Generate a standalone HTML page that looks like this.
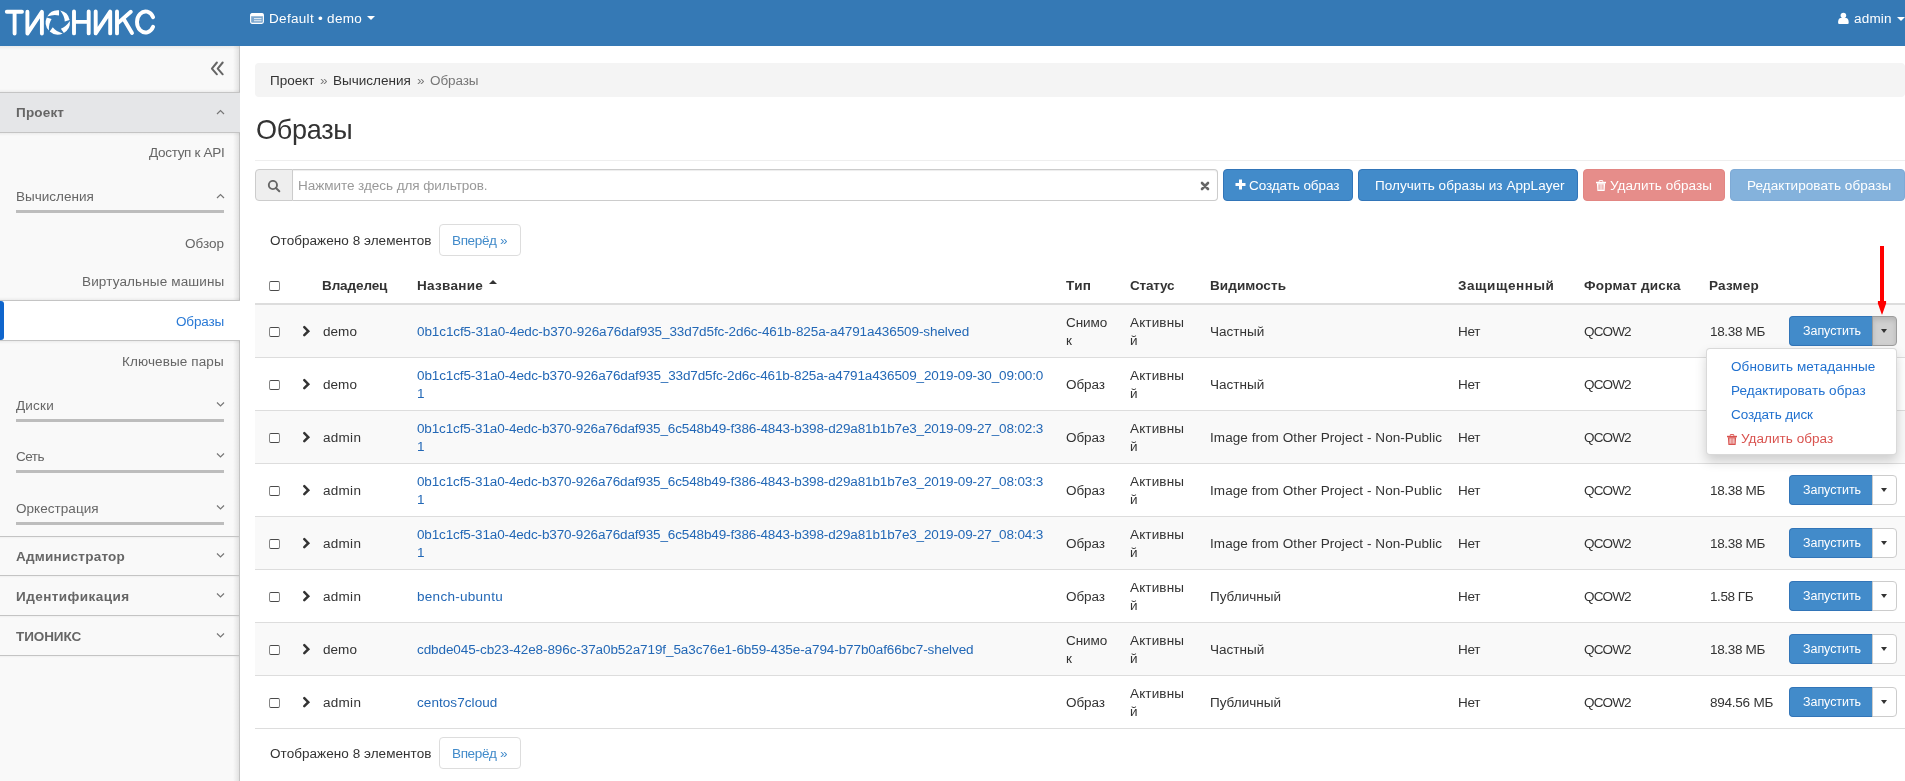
<!DOCTYPE html><html><head><meta charset="utf-8"><style>*{margin:0;padding:0}html,body{width:1905px;height:781px;overflow:hidden;background:#fff}
.a{position:absolute}.t{position:absolute;white-space:nowrap;will-change:transform;font-family:"Liberation Sans",sans-serif}</style></head><body><div class="a" style="left:0px;top:0px;width:1905px;height:46px;background:#3579b5"></div>
<svg class="a" style="left:0;top:0" width="170" height="46" viewBox="0 0 170 46">
<g fill="none" stroke="#fff" stroke-width="3.9" stroke-linecap="round" stroke-linejoin="round">
<path d="M6.8 11.7H22 M14.6 11.7V33.6"/>
<path d="M27.4 11.7V33.6 L41.9 11.9 V33.6"/>
<path d="M74 11.4V33.4 M74 21.9H88.7 M88.7 11.4V33.4"/>
<path d="M95.7 11.4V33.4 L110.2 11.6 V33.4"/>
<path d="M117 11.4V33.4 M117.3 23.6 L130.8 11.8 M123.4 18.4 L132 33"/>
<path d="M153.1 17.3 A8.5 10.5 0 1 0 153.1 26.7"/>
</g>
<g fill="#fff"><path d="M60.21 10.54 A12.1 12.1 0 0 1 69.64 19.88 L64.73 21.43 Q64.57 16.03 60.21 10.54Z"/><path d="M69.82 21.03 A12.1 12.1 0 0 1 63.85 32.88 L60.87 28.69 Q65.95 26.87 69.82 21.03Z"/><path d="M62.82 33.41 A12.1 12.1 0 0 1 49.70 31.39 L52.76 27.26 Q56.07 31.54 62.82 33.41Z"/><path d="M48.88 30.57 A12.1 12.1 0 0 1 46.75 17.48 L51.62 19.11 Q48.57 23.57 48.88 30.57Z"/><path d="M47.27 16.44 A12.1 12.1 0 0 1 59.06 10.37 L59.02 15.51 Q53.83 13.99 47.27 16.44Z"/></g>
</svg>
<svg class="a" style="left:250px;top:12.5px" width="14" height="11" viewBox="0 0 14 11">
<rect x="1" y="3" width="12" height="7" fill="#fff" opacity=".35"/>
<rect x="0.6" y="0.6" width="12.8" height="9.8" rx="1.6" fill="none" stroke="#fff" stroke-width="1.1"/>
<rect x="0.6" y="0.6" width="12.8" height="2.6" rx="1" fill="#fff"/>
<rect x="4" y="5.2" width="7.5" height="0.9" fill="#fff" opacity=".9"/>
<rect x="4" y="7.3" width="7.5" height="0.9" fill="#fff" opacity=".9"/>
</svg>
<div class="t" id="t0" style="left:269px;top:9.82px;font-size:13.52px;line-height:18px;color:#fff;font-weight:400;letter-spacing:0.302px;">Default • demo</div>
<div class="a" style="left:367px;top:16px;width:0;height:0;border-left:4px solid transparent;border-right:4px solid transparent;border-top:4.5px solid #fff"></div>
<svg class="a" style="left:1838px;top:12px" width="11" height="13" viewBox="0 0 11 13">
<circle cx="5.4" cy="3.5" r="2.8" fill="#fff"/>
<path d="M0.1 11 C0 8 0.9 6.3 2.4 6 L8.4 6 C9.9 6.3 10.8 8 10.7 11 Q10.6 12 9.6 12 L1.2 12 Q0.2 12 0.1 11 Z" fill="#fff"/>
</svg>
<div class="t" id="t1" style="left:1853.9px;top:9.97px;font-size:13.52px;line-height:18px;color:#fff;font-weight:400;letter-spacing:0.172px;">admin</div>
<div class="a" style="left:1897px;top:16.5px;width:0;height:0;border-left:4px solid transparent;border-right:4px solid transparent;border-top:4.5px solid #fff"></div>
<div class="a" style="left:0px;top:46px;width:240px;height:47px;background:#f9f9f9"></div>
<div class="a" style="left:233px;top:46px;width:6px;height:47px;background:linear-gradient(to right,rgba(0,0,0,0),rgba(0,0,0,.09))"></div>
<div class="a" style="left:239px;top:46px;width:1px;height:47px;background:#c4c4c4"></div>
<div class="a" style="left:0px;top:92px;width:240px;height:1px;background:#c4c4c4"></div>
<div class="a" style="left:0px;top:89px;width:240px;height:3px;background:linear-gradient(to top,rgba(0,0,0,.05),rgba(0,0,0,0))"></div>
<div class="a" style="left:0px;top:46px;width:239px;height:4px;background:linear-gradient(to bottom,rgba(0,0,0,.06),rgba(0,0,0,0))"></div>
<div class="a" style="left:0px;top:132px;width:240px;height:169px;background:#f9f9f9"></div>
<div class="a" style="left:233px;top:132px;width:6px;height:169px;background:linear-gradient(to right,rgba(0,0,0,0),rgba(0,0,0,.09))"></div>
<div class="a" style="left:239px;top:132px;width:1px;height:169px;background:#c4c4c4"></div>
<div class="a" style="left:0px;top:132px;width:240px;height:1px;background:#c4c4c4"></div>
<div class="a" style="left:0px;top:133px;width:240px;height:3px;background:linear-gradient(to bottom,rgba(0,0,0,.05),rgba(0,0,0,0))"></div>
<div class="a" style="left:0px;top:300px;width:240px;height:1px;background:#c4c4c4"></div>
<div class="a" style="left:0px;top:297px;width:240px;height:3px;background:linear-gradient(to top,rgba(0,0,0,.05),rgba(0,0,0,0))"></div>
<div class="a" style="left:0px;top:340px;width:240px;height:441px;background:#f9f9f9"></div>
<div class="a" style="left:233px;top:340px;width:6px;height:441px;background:linear-gradient(to right,rgba(0,0,0,0),rgba(0,0,0,.09))"></div>
<div class="a" style="left:239px;top:340px;width:1px;height:441px;background:#c4c4c4"></div>
<div class="a" style="left:0px;top:340px;width:240px;height:1px;background:#c4c4c4"></div>
<div class="a" style="left:0px;top:341px;width:240px;height:3px;background:linear-gradient(to bottom,rgba(0,0,0,.05),rgba(0,0,0,0))"></div>
<svg class="a" style="left:209px;top:60px" width="17" height="17" viewBox="0 0 17 17">
<path d="M7.9 2.5 L2.9 8.6 L7.9 14.3 M13.7 2.5 L8.7 8.6 L13.7 14.3" fill="none" stroke="#666" stroke-width="2" stroke-linecap="round" stroke-linejoin="round"/>
</svg>
<div class="a" style="left:0px;top:93px;width:240px;height:39px;background:#e5e6e8"></div>
<div class="t" id="t2" style="left:16px;top:104.32px;font-size:13.52px;line-height:18px;color:#666;font-weight:700;letter-spacing:0.172px;">Проект</div>
<svg class="a" style="left:216px;top:109px" width="9" height="7" viewBox="0 0 9 7"><path d="M1 5 L4.5 1.5 L8 5" fill="none" stroke="#777" stroke-width="1.2"/></svg>
<div class="t" id="t3" style="right:1681px;top:143.92px;font-size:13.52px;line-height:18px;color:#666;font-weight:400;letter-spacing:-0.311px;">Доступ к API</div>
<div class="t" id="t4" style="left:16px;top:188.12px;font-size:13.52px;line-height:18px;color:#666;font-weight:400;letter-spacing:0.008px;">Вычисления</div>
<svg class="a" style="left:216px;top:193px" width="9" height="7" viewBox="0 0 9 7"><path d="M1 5 L4.5 1.5 L8 5" fill="none" stroke="#777" stroke-width="1.2"/></svg>
<div class="a" style="left:16px;top:210px;width:208px;height:3px;background:#bdbdbd"></div>
<div class="t" id="t5" style="right:1681px;top:235.12px;font-size:13.52px;line-height:18px;color:#666;font-weight:400;letter-spacing:0.013px;">Обзор</div>
<div class="t" id="t6" style="right:1681px;top:273.02px;font-size:13.52px;line-height:18px;color:#666;font-weight:400;letter-spacing:0.134px;">Виртуальные машины</div>
<div class="a" style="left:0px;top:301px;width:244px;height:39px;background:#fff"></div>
<div class="a" style="left:0px;top:301px;width:4px;height:39px;background:#0f65cc;border-radius:0 3px 3px 0"></div>
<div class="t" id="t7" style="right:1681px;top:312.62px;font-size:13.52px;line-height:18px;color:#2a7ad6;font-weight:400;letter-spacing:-0.153px;">Образы</div>
<div class="t" id="t8" style="right:1681px;top:352.62px;font-size:13.52px;line-height:18px;color:#666;font-weight:400;letter-spacing:0.101px;">Ключевые пары</div>
<div class="t" id="t9" style="left:16px;top:397.22px;font-size:13.52px;line-height:18px;color:#666;font-weight:400;letter-spacing:0.191px;">Диски</div>
<svg class="a" style="left:216px;top:401px" width="9" height="7" viewBox="0 0 9 7"><path d="M1 1.5 L4.5 5 L8 1.5" fill="none" stroke="#777" stroke-width="1.2"/></svg>
<div class="a" style="left:16px;top:419px;width:208px;height:3px;background:#bdbdbd"></div>
<div class="t" id="t10" style="left:16px;top:447.72px;font-size:13.52px;line-height:18px;color:#666;font-weight:400;letter-spacing:-0.521px;">Сеть</div>
<svg class="a" style="left:216px;top:452px" width="9" height="7" viewBox="0 0 9 7"><path d="M1 1.5 L4.5 5 L8 1.5" fill="none" stroke="#777" stroke-width="1.2"/></svg>
<div class="a" style="left:16px;top:470px;width:208px;height:3px;background:#bdbdbd"></div>
<div class="t" id="t11" style="left:16px;top:499.62px;font-size:13.52px;line-height:18px;color:#666;font-weight:400;letter-spacing:0.040px;">Оркестрация</div>
<svg class="a" style="left:216px;top:504px" width="9" height="7" viewBox="0 0 9 7"><path d="M1 1.5 L4.5 5 L8 1.5" fill="none" stroke="#777" stroke-width="1.2"/></svg>
<div class="a" style="left:16px;top:522px;width:208px;height:3px;background:#bdbdbd"></div>
<div class="a" style="left:0px;top:536px;width:239px;height:1px;background:#c4c4c4"></div>
<div class="a" style="left:0px;top:537px;width:239px;height:2px;background:linear-gradient(to bottom,rgba(0,0,0,.04),rgba(0,0,0,0))"></div>
<div class="t" id="t12" style="left:16px;top:548.32px;font-size:13.52px;line-height:18px;color:#666;font-weight:700;letter-spacing:0.235px;">Администратор</div>
<svg class="a" style="left:216px;top:552px" width="9" height="7" viewBox="0 0 9 7"><path d="M1 1.5 L4.5 5 L8 1.5" fill="none" stroke="#777" stroke-width="1.2"/></svg>
<div class="a" style="left:0px;top:575px;width:239px;height:1px;background:#c4c4c4"></div>
<div class="a" style="left:0px;top:576px;width:239px;height:2px;background:linear-gradient(to bottom,rgba(0,0,0,.04),rgba(0,0,0,0))"></div>
<div class="t" id="t13" style="left:16px;top:588.12px;font-size:13.52px;line-height:18px;color:#666;font-weight:700;letter-spacing:0.448px;">Идентификация</div>
<svg class="a" style="left:216px;top:592px" width="9" height="7" viewBox="0 0 9 7"><path d="M1 1.5 L4.5 5 L8 1.5" fill="none" stroke="#777" stroke-width="1.2"/></svg>
<div class="a" style="left:0px;top:615px;width:239px;height:1px;background:#c4c4c4"></div>
<div class="a" style="left:0px;top:616px;width:239px;height:2px;background:linear-gradient(to bottom,rgba(0,0,0,.04),rgba(0,0,0,0))"></div>
<div class="t" id="t14" style="left:16px;top:627.52px;font-size:13.52px;line-height:18px;color:#666;font-weight:700;letter-spacing:-0.099px;">ТИОНИКС</div>
<svg class="a" style="left:216px;top:632px" width="9" height="7" viewBox="0 0 9 7"><path d="M1 1.5 L4.5 5 L8 1.5" fill="none" stroke="#777" stroke-width="1.2"/></svg>
<div class="a" style="left:0px;top:655px;width:239px;height:1px;background:#c4c4c4"></div>
<div class="a" style="left:0px;top:656px;width:239px;height:2px;background:linear-gradient(to bottom,rgba(0,0,0,.04),rgba(0,0,0,0))"></div>
<div class="a" style="left:255px;top:63px;width:1650px;height:34px;background:#f4f4f4;border-radius:4px"></div>
<div class="t" id="t15" style="left:270.3px;top:72.12px;font-size:13.52px;line-height:18px;color:#333;font-weight:400;letter-spacing:-0.006px;">Проект</div>
<div class="t" id="t16" style="left:320px;top:72.12px;font-size:13.52px;line-height:18px;color:#777;font-weight:400;">»</div>
<div class="t" id="t17" style="left:333.2px;top:72.12px;font-size:13.52px;line-height:18px;color:#333;font-weight:400;letter-spacing:-0.003px;">Вычисления</div>
<div class="t" id="t18" style="left:417px;top:72.12px;font-size:13.52px;line-height:18px;color:#777;font-weight:400;">»</div>
<div class="t" id="t19" style="left:429.5px;top:72.12px;font-size:13.52px;line-height:18px;color:#777;font-weight:400;letter-spacing:-0.113px;">Образы</div>
<div class="t" id="t20" style="left:256px;top:112.83px;font-size:27.04px;line-height:35px;color:#333;font-weight:400;letter-spacing:-0.282px;">Образы</div>
<div class="a" style="left:255px;top:160px;width:1650px;height:1px;background:#eee"></div>
<div class="a" style="left:255px;top:169px;width:38px;height:32px;background:#eee;border:1px solid #ccc;border-radius:4px 0 0 4px;box-sizing:border-box"></div>
<svg class="a" style="left:267px;top:180px" width="14" height="13" viewBox="0 0 14 13">
<circle cx="5.9" cy="5" r="4.1" fill="none" stroke="#666" stroke-width="1.9"/>
<path d="M8.9 8 L12.3 11.2" stroke="#666" stroke-width="2" stroke-linecap="round"/>
</svg>
<div class="a" style="left:293px;top:169px;width:925px;height:32px;background:#fff;border:1px solid #ccc;border-left:0;border-radius:0 4px 4px 0;box-sizing:border-box;box-shadow:inset 0 1px 1px rgba(0,0,0,.075)"></div>
<div class="t" id="t21" style="left:298.4px;top:177.32px;font-size:13.52px;line-height:18px;color:#999;font-weight:400;letter-spacing:-0.049px;">Нажмите здесь для фильтров.</div>
<svg class="a" style="left:1200px;top:181px" width="10" height="10" viewBox="0 0 10 10">
<path d="M2 2 L8 8 M8 2 L2 8" stroke="#666" stroke-width="2.6" stroke-linecap="round"/>
</svg>
<div class="a" style="left:1223px;top:169px;width:130px;height:32px;background:#428bca;border:1px solid #3275b8;box-sizing:border-box;border-radius:4px"></div>
<svg class="a" style="left:1235px;top:179.3px" width="11" height="11" viewBox="0 0 11 11">
<path d="M5.5 0.5 V10.5 M0.5 5.5 H10.5" stroke="#fff" stroke-width="3"/></svg>
<div class="t" id="t22" style="left:1249.4px;top:177.12px;font-size:13.52px;line-height:18px;color:#fff;font-weight:400;letter-spacing:-0.089px;">Создать образ</div>
<div class="a" style="left:1358px;top:169px;width:220px;height:32px;background:#428bca;border:1px solid #3275b8;box-sizing:border-box;border-radius:4px"></div>
<div class="t" id="t23" style="left:1375.1px;top:177.12px;font-size:13.52px;line-height:18px;color:#fff;font-weight:400;letter-spacing:0.049px;">Получить образы из AppLayer</div>
<div class="a" style="left:1583px;top:169px;width:142px;height:32px;background:#e68d8a;border:1px solid #e28683;box-sizing:border-box;border-radius:4px"></div>
<svg class="a" style="left:1596px;top:180px" width="10" height="11" viewBox="0 0 10 11">
<path d="M3.2 1.8 V1 Q3.2 0.4 3.9 0.4 H6.1 Q6.8 0.4 6.8 1 V1.8" stroke="#fff" stroke-width="1" fill="none"/>
<rect x="0" y="1.8" width="10" height="1.5" fill="#fff"/>
<path d="M0.9 3.2 H9.1 L8.6 11 H1.4 Z" fill="#fff"/>
<rect x="2.3" y="4.3" width="5.4" height="5.4" fill="#e68d8a" opacity=".6"/>
<rect x="4.6" y="4.3" width="0.8" height="5.4" fill="#fff" opacity=".8"/>
</svg>
<div class="t" id="t24" style="left:1609.6px;top:177.12px;font-size:13.52px;line-height:18px;color:#fff;font-weight:400;letter-spacing:0.037px;">Удалить образы</div>
<div class="a" style="left:1730px;top:169px;width:175px;height:32px;background:#84b2dc;border:1px solid #7eaad6;box-sizing:border-box;border-radius:4px"></div>
<div class="t" id="t25" style="left:1747.2px;top:177.12px;font-size:13.52px;line-height:18px;color:#fff;font-weight:400;letter-spacing:0.054px;">Редактировать образы</div>
<div class="t" id="t26" style="left:270.2px;top:232.02px;font-size:13.52px;line-height:18px;color:#333;font-weight:400;letter-spacing:0.047px;">Отображено 8 элементов</div>
<div class="a" style="left:439px;top:224px;width:82px;height:32px;background:#fff;border:1px solid #ddd;border-radius:4px;box-sizing:border-box"></div>
<div class="t" id="t27" style="left:452.2px;top:232.02px;font-size:13.52px;line-height:18px;color:#428bca;font-weight:400;letter-spacing:-0.364px;">Вперёд »</div>
<div class="a" style="left:269px;top:281px;width:11px;height:10.3px;background:#fff;border:1.3px solid #4a4a4a;border-left-color:#858585;border-right-color:#858585;border-radius:2px;box-sizing:border-box"></div>
<div class="t" id="t28" style="left:322.2px;top:276.82px;font-size:13.52px;line-height:18px;color:#333;font-weight:700;letter-spacing:-0.115px;">Владелец</div>
<div class="t" id="t29" style="left:417.2px;top:276.82px;font-size:13.52px;line-height:18px;color:#333;font-weight:700;letter-spacing:0.286px;">Название</div>
<div class="t" id="t30" style="left:1066.4px;top:276.82px;font-size:13.52px;line-height:18px;color:#333;font-weight:700;letter-spacing:0.391px;">Тип</div>
<div class="t" id="t31" style="left:1130.4px;top:276.82px;font-size:13.52px;line-height:18px;color:#333;font-weight:700;letter-spacing:-0.212px;">Статус</div>
<div class="t" id="t32" style="left:1209.5px;top:276.82px;font-size:13.52px;line-height:18px;color:#333;font-weight:700;letter-spacing:0.086px;">Видимость</div>
<div class="t" id="t33" style="left:1458.3px;top:276.82px;font-size:13.52px;line-height:18px;color:#333;font-weight:700;letter-spacing:0.567px;">Защищенный</div>
<div class="t" id="t34" style="left:1583.5px;top:276.82px;font-size:13.52px;line-height:18px;color:#333;font-weight:700;letter-spacing:0.202px;">Формат диска</div>
<div class="t" id="t35" style="left:1709.2px;top:276.82px;font-size:13.52px;line-height:18px;color:#333;font-weight:700;letter-spacing:0.226px;">Размер</div>
<div class="a" style="left:489px;top:279.5px;width:0;height:0;border-left:4px solid transparent;border-right:4px solid transparent;border-bottom:4.5px solid #333"></div>
<div class="a" style="left:255px;top:303px;width:1650px;height:2px;background:#ddd"></div>
<div class="a" style="left:255px;top:305px;width:1650px;height:52px;background:#f9f9f9"></div>
<div class="a" style="left:255px;top:357px;width:1650px;height:1px;background:#ddd"></div>
<div class="a" style="left:269px;top:327px;width:11px;height:10.3px;background:#fff;border:1.3px solid #4a4a4a;border-left-color:#858585;border-right-color:#858585;border-radius:2px;box-sizing:border-box"></div>
<svg class="a" style="left:301px;top:324.5px" width="11" height="13" viewBox="0 0 11 13"><path d="M3.3 2.2 L7.3 6.2 L3.3 10.2" fill="none" stroke="#333" stroke-width="2.5" stroke-linecap="round"/></svg>
<div class="t" id="t36" style="left:322.5px;top:322.72px;font-size:13.52px;line-height:18px;color:#333;font-weight:400;letter-spacing:0.029px;">demo</div>
<div class="t" id="t37" style="left:417.2px;top:322.52px;font-size:13.52px;line-height:18px;color:#2368b6;font-weight:400;letter-spacing:-0.104px;">0b1c1cf5-31a0-4edc-b370-926a76daf935_33d7d5fc-2d6c-461b-825a-a4791a436509-shelved</div>
<div class="t" id="t38" style="left:1066.4px;top:314.02px;font-size:13.52px;line-height:18px;color:#333;font-weight:400;letter-spacing:-0.098px;">Снимо</div>
<div class="t" id="t39" style="left:1066.4px;top:332.22px;font-size:13.52px;line-height:18px;color:#333;font-weight:400;">к</div>
<div class="t" id="t40" style="left:1130.4px;top:314.02px;font-size:13.52px;line-height:18px;color:#333;font-weight:400;letter-spacing:0.135px;">Активны</div>
<div class="t" id="t41" style="left:1130.4px;top:332.22px;font-size:13.52px;line-height:18px;color:#333;font-weight:400;">й</div>
<div class="t" id="t42" style="left:1209.5px;top:322.52px;font-size:13.52px;line-height:18px;color:#333;font-weight:400;">Частный</div>
<div class="t" id="t43" style="left:1458.3px;top:322.52px;font-size:13.52px;line-height:18px;color:#333;font-weight:400;letter-spacing:-0.316px;">Нет</div>
<div class="t" id="t44" style="left:1583.5px;top:322.52px;font-size:13.52px;line-height:18px;color:#333;font-weight:400;letter-spacing:-0.866px;">QCOW2</div>
<div class="t" id="t45" style="left:1709.5px;top:322.52px;font-size:13.52px;line-height:18px;color:#333;font-weight:400;letter-spacing:-0.331px;">18.38 МБ</div>
<div class="a" style="left:1789px;top:316px;width:84px;height:30px;background:#428bca;border:1px solid #3275b8;border-right:0;border-radius:4px 0 0 4px;box-sizing:border-box"></div>
<div class="t" id="t46" style="left:1803.3px;top:323.28px;font-size:12.48px;line-height:16px;color:#fff;font-weight:400;letter-spacing:-0.042px;">Запустить</div>
<div class="a" style="left:1872px;top:316px;width:24.5px;height:30px;background:#d0d0d0;border:1px solid #9c9c9c;border-radius:0 4px 4px 0;box-sizing:border-box;box-shadow:inset 0 3px 5px rgba(0,0,0,.125)"></div>
<div class="a" style="left:1880.8px;top:329px;width:0;height:0;border-left:3.7px solid transparent;border-right:3.7px solid transparent;border-top:4.3px solid #333"></div>
<div class="a" style="left:255px;top:410px;width:1650px;height:1px;background:#ddd"></div>
<div class="a" style="left:269px;top:380px;width:11px;height:10.3px;background:#fff;border:1.3px solid #4a4a4a;border-left-color:#858585;border-right-color:#858585;border-radius:2px;box-sizing:border-box"></div>
<svg class="a" style="left:301px;top:377.5px" width="11" height="13" viewBox="0 0 11 13"><path d="M3.3 2.2 L7.3 6.2 L3.3 10.2" fill="none" stroke="#333" stroke-width="2.5" stroke-linecap="round"/></svg>
<div class="t" id="t47" style="left:322.5px;top:375.72px;font-size:13.52px;line-height:18px;color:#333;font-weight:400;letter-spacing:0.029px;">demo</div>
<div class="t" id="t48" style="left:417.2px;top:366.92px;font-size:13.52px;line-height:18px;color:#2368b6;font-weight:400;letter-spacing:-0.137px;">0b1c1cf5-31a0-4edc-b370-926a76daf935_33d7d5fc-2d6c-461b-825a-a4791a436509_2019-09-30_09:00:0</div>
<div class="t" id="t49" style="left:417.2px;top:384.72px;font-size:13.52px;line-height:18px;color:#2368b6;font-weight:400;">1</div>
<div class="t" id="t50" style="left:1066.4px;top:375.52px;font-size:13.52px;line-height:18px;color:#333;font-weight:400;letter-spacing:-0.086px;">Образ</div>
<div class="t" id="t51" style="left:1130.4px;top:367.02px;font-size:13.52px;line-height:18px;color:#333;font-weight:400;letter-spacing:0.135px;">Активны</div>
<div class="t" id="t52" style="left:1130.4px;top:385.22px;font-size:13.52px;line-height:18px;color:#333;font-weight:400;">й</div>
<div class="t" id="t53" style="left:1209.5px;top:375.52px;font-size:13.52px;line-height:18px;color:#333;font-weight:400;">Частный</div>
<div class="t" id="t54" style="left:1458.3px;top:375.52px;font-size:13.52px;line-height:18px;color:#333;font-weight:400;letter-spacing:-0.316px;">Нет</div>
<div class="t" id="t55" style="left:1583.5px;top:375.52px;font-size:13.52px;line-height:18px;color:#333;font-weight:400;letter-spacing:-0.866px;">QCOW2</div>
<div class="t" id="t56" style="left:1709.5px;top:375.52px;font-size:13.52px;line-height:18px;color:#333;font-weight:400;letter-spacing:-0.331px;">18.38 МБ</div>
<div class="a" style="left:1789px;top:369px;width:84px;height:30px;background:#428bca;border:1px solid #3275b8;border-right:0;border-radius:4px 0 0 4px;box-sizing:border-box"></div>
<div class="t" id="t57" style="left:1803.3px;top:376.28px;font-size:12.48px;line-height:16px;color:#fff;font-weight:400;letter-spacing:-0.042px;">Запустить</div>
<div class="a" style="left:1872px;top:369px;width:24.5px;height:30px;background:#fff;border:1px solid #ccc;border-radius:0 4px 4px 0;box-sizing:border-box"></div>
<div class="a" style="left:1880.8px;top:382px;width:0;height:0;border-left:3.7px solid transparent;border-right:3.7px solid transparent;border-top:4.3px solid #333"></div>
<div class="a" style="left:255px;top:411px;width:1650px;height:52px;background:#f9f9f9"></div>
<div class="a" style="left:255px;top:463px;width:1650px;height:1px;background:#ddd"></div>
<div class="a" style="left:269px;top:433px;width:11px;height:10.3px;background:#fff;border:1.3px solid #4a4a4a;border-left-color:#858585;border-right-color:#858585;border-radius:2px;box-sizing:border-box"></div>
<svg class="a" style="left:301px;top:430.5px" width="11" height="13" viewBox="0 0 11 13"><path d="M3.3 2.2 L7.3 6.2 L3.3 10.2" fill="none" stroke="#333" stroke-width="2.5" stroke-linecap="round"/></svg>
<div class="t" id="t58" style="left:322.5px;top:428.72px;font-size:13.52px;line-height:18px;color:#333;font-weight:400;letter-spacing:0.272px;">admin</div>
<div class="t" id="t59" style="left:417.2px;top:419.92px;font-size:13.52px;line-height:18px;color:#2368b6;font-weight:400;letter-spacing:-0.146px;">0b1c1cf5-31a0-4edc-b370-926a76daf935_6c548b49-f386-4843-b398-d29a81b1b7e3_2019-09-27_08:02:3</div>
<div class="t" id="t60" style="left:417.2px;top:437.72px;font-size:13.52px;line-height:18px;color:#2368b6;font-weight:400;">1</div>
<div class="t" id="t61" style="left:1066.4px;top:428.52px;font-size:13.52px;line-height:18px;color:#333;font-weight:400;letter-spacing:-0.086px;">Образ</div>
<div class="t" id="t62" style="left:1130.4px;top:420.02px;font-size:13.52px;line-height:18px;color:#333;font-weight:400;letter-spacing:0.135px;">Активны</div>
<div class="t" id="t63" style="left:1130.4px;top:438.22px;font-size:13.52px;line-height:18px;color:#333;font-weight:400;">й</div>
<div class="t" id="t64" style="left:1209.5px;top:428.52px;font-size:13.52px;line-height:18px;color:#333;font-weight:400;letter-spacing:0.059px;">Image from Other Project - Non-Public</div>
<div class="t" id="t65" style="left:1458.3px;top:428.52px;font-size:13.52px;line-height:18px;color:#333;font-weight:400;letter-spacing:-0.316px;">Нет</div>
<div class="t" id="t66" style="left:1583.5px;top:428.52px;font-size:13.52px;line-height:18px;color:#333;font-weight:400;letter-spacing:-0.866px;">QCOW2</div>
<div class="t" id="t67" style="left:1709.5px;top:428.52px;font-size:13.52px;line-height:18px;color:#333;font-weight:400;letter-spacing:-0.331px;">18.38 МБ</div>
<div class="a" style="left:1789px;top:422px;width:84px;height:30px;background:#428bca;border:1px solid #3275b8;border-right:0;border-radius:4px 0 0 4px;box-sizing:border-box"></div>
<div class="t" id="t68" style="left:1803.3px;top:429.28px;font-size:12.48px;line-height:16px;color:#fff;font-weight:400;letter-spacing:-0.042px;">Запустить</div>
<div class="a" style="left:1872px;top:422px;width:24.5px;height:30px;background:#fff;border:1px solid #ccc;border-radius:0 4px 4px 0;box-sizing:border-box"></div>
<div class="a" style="left:1880.8px;top:435px;width:0;height:0;border-left:3.7px solid transparent;border-right:3.7px solid transparent;border-top:4.3px solid #333"></div>
<div class="a" style="left:255px;top:516px;width:1650px;height:1px;background:#ddd"></div>
<div class="a" style="left:269px;top:486px;width:11px;height:10.3px;background:#fff;border:1.3px solid #4a4a4a;border-left-color:#858585;border-right-color:#858585;border-radius:2px;box-sizing:border-box"></div>
<svg class="a" style="left:301px;top:483.5px" width="11" height="13" viewBox="0 0 11 13"><path d="M3.3 2.2 L7.3 6.2 L3.3 10.2" fill="none" stroke="#333" stroke-width="2.5" stroke-linecap="round"/></svg>
<div class="t" id="t69" style="left:322.5px;top:481.72px;font-size:13.52px;line-height:18px;color:#333;font-weight:400;letter-spacing:0.272px;">admin</div>
<div class="t" id="t70" style="left:417.2px;top:472.92px;font-size:13.52px;line-height:18px;color:#2368b6;font-weight:400;letter-spacing:-0.146px;">0b1c1cf5-31a0-4edc-b370-926a76daf935_6c548b49-f386-4843-b398-d29a81b1b7e3_2019-09-27_08:03:3</div>
<div class="t" id="t71" style="left:417.2px;top:490.72px;font-size:13.52px;line-height:18px;color:#2368b6;font-weight:400;">1</div>
<div class="t" id="t72" style="left:1066.4px;top:481.52px;font-size:13.52px;line-height:18px;color:#333;font-weight:400;letter-spacing:-0.086px;">Образ</div>
<div class="t" id="t73" style="left:1130.4px;top:473.02px;font-size:13.52px;line-height:18px;color:#333;font-weight:400;letter-spacing:0.135px;">Активны</div>
<div class="t" id="t74" style="left:1130.4px;top:491.22px;font-size:13.52px;line-height:18px;color:#333;font-weight:400;">й</div>
<div class="t" id="t75" style="left:1209.5px;top:481.52px;font-size:13.52px;line-height:18px;color:#333;font-weight:400;letter-spacing:0.059px;">Image from Other Project - Non-Public</div>
<div class="t" id="t76" style="left:1458.3px;top:481.52px;font-size:13.52px;line-height:18px;color:#333;font-weight:400;letter-spacing:-0.316px;">Нет</div>
<div class="t" id="t77" style="left:1583.5px;top:481.52px;font-size:13.52px;line-height:18px;color:#333;font-weight:400;letter-spacing:-0.866px;">QCOW2</div>
<div class="t" id="t78" style="left:1709.5px;top:481.52px;font-size:13.52px;line-height:18px;color:#333;font-weight:400;letter-spacing:-0.331px;">18.38 МБ</div>
<div class="a" style="left:1789px;top:475px;width:84px;height:30px;background:#428bca;border:1px solid #3275b8;border-right:0;border-radius:4px 0 0 4px;box-sizing:border-box"></div>
<div class="t" id="t79" style="left:1803.3px;top:482.28px;font-size:12.48px;line-height:16px;color:#fff;font-weight:400;letter-spacing:-0.042px;">Запустить</div>
<div class="a" style="left:1872px;top:475px;width:24.5px;height:30px;background:#fff;border:1px solid #ccc;border-radius:0 4px 4px 0;box-sizing:border-box"></div>
<div class="a" style="left:1880.8px;top:488px;width:0;height:0;border-left:3.7px solid transparent;border-right:3.7px solid transparent;border-top:4.3px solid #333"></div>
<div class="a" style="left:255px;top:517px;width:1650px;height:52px;background:#f9f9f9"></div>
<div class="a" style="left:255px;top:569px;width:1650px;height:1px;background:#ddd"></div>
<div class="a" style="left:269px;top:539px;width:11px;height:10.3px;background:#fff;border:1.3px solid #4a4a4a;border-left-color:#858585;border-right-color:#858585;border-radius:2px;box-sizing:border-box"></div>
<svg class="a" style="left:301px;top:536.5px" width="11" height="13" viewBox="0 0 11 13"><path d="M3.3 2.2 L7.3 6.2 L3.3 10.2" fill="none" stroke="#333" stroke-width="2.5" stroke-linecap="round"/></svg>
<div class="t" id="t80" style="left:322.5px;top:534.72px;font-size:13.52px;line-height:18px;color:#333;font-weight:400;letter-spacing:0.272px;">admin</div>
<div class="t" id="t81" style="left:417.2px;top:525.92px;font-size:13.52px;line-height:18px;color:#2368b6;font-weight:400;letter-spacing:-0.146px;">0b1c1cf5-31a0-4edc-b370-926a76daf935_6c548b49-f386-4843-b398-d29a81b1b7e3_2019-09-27_08:04:3</div>
<div class="t" id="t82" style="left:417.2px;top:543.72px;font-size:13.52px;line-height:18px;color:#2368b6;font-weight:400;">1</div>
<div class="t" id="t83" style="left:1066.4px;top:534.52px;font-size:13.52px;line-height:18px;color:#333;font-weight:400;letter-spacing:-0.086px;">Образ</div>
<div class="t" id="t84" style="left:1130.4px;top:526.02px;font-size:13.52px;line-height:18px;color:#333;font-weight:400;letter-spacing:0.135px;">Активны</div>
<div class="t" id="t85" style="left:1130.4px;top:544.22px;font-size:13.52px;line-height:18px;color:#333;font-weight:400;">й</div>
<div class="t" id="t86" style="left:1209.5px;top:534.52px;font-size:13.52px;line-height:18px;color:#333;font-weight:400;letter-spacing:0.059px;">Image from Other Project - Non-Public</div>
<div class="t" id="t87" style="left:1458.3px;top:534.52px;font-size:13.52px;line-height:18px;color:#333;font-weight:400;letter-spacing:-0.316px;">Нет</div>
<div class="t" id="t88" style="left:1583.5px;top:534.52px;font-size:13.52px;line-height:18px;color:#333;font-weight:400;letter-spacing:-0.866px;">QCOW2</div>
<div class="t" id="t89" style="left:1709.5px;top:534.52px;font-size:13.52px;line-height:18px;color:#333;font-weight:400;letter-spacing:-0.331px;">18.38 МБ</div>
<div class="a" style="left:1789px;top:528px;width:84px;height:30px;background:#428bca;border:1px solid #3275b8;border-right:0;border-radius:4px 0 0 4px;box-sizing:border-box"></div>
<div class="t" id="t90" style="left:1803.3px;top:535.28px;font-size:12.48px;line-height:16px;color:#fff;font-weight:400;letter-spacing:-0.042px;">Запустить</div>
<div class="a" style="left:1872px;top:528px;width:24.5px;height:30px;background:#fff;border:1px solid #ccc;border-radius:0 4px 4px 0;box-sizing:border-box"></div>
<div class="a" style="left:1880.8px;top:541px;width:0;height:0;border-left:3.7px solid transparent;border-right:3.7px solid transparent;border-top:4.3px solid #333"></div>
<div class="a" style="left:255px;top:622px;width:1650px;height:1px;background:#ddd"></div>
<div class="a" style="left:269px;top:592px;width:11px;height:10.3px;background:#fff;border:1.3px solid #4a4a4a;border-left-color:#858585;border-right-color:#858585;border-radius:2px;box-sizing:border-box"></div>
<svg class="a" style="left:301px;top:589.5px" width="11" height="13" viewBox="0 0 11 13"><path d="M3.3 2.2 L7.3 6.2 L3.3 10.2" fill="none" stroke="#333" stroke-width="2.5" stroke-linecap="round"/></svg>
<div class="t" id="t91" style="left:322.5px;top:587.72px;font-size:13.52px;line-height:18px;color:#333;font-weight:400;letter-spacing:0.272px;">admin</div>
<div class="t" id="t92" style="left:417.2px;top:587.52px;font-size:13.52px;line-height:18px;color:#2368b6;font-weight:400;letter-spacing:0.275px;">bench-ubuntu</div>
<div class="t" id="t93" style="left:1066.4px;top:587.52px;font-size:13.52px;line-height:18px;color:#333;font-weight:400;letter-spacing:-0.086px;">Образ</div>
<div class="t" id="t94" style="left:1130.4px;top:579.02px;font-size:13.52px;line-height:18px;color:#333;font-weight:400;letter-spacing:0.135px;">Активны</div>
<div class="t" id="t95" style="left:1130.4px;top:597.22px;font-size:13.52px;line-height:18px;color:#333;font-weight:400;">й</div>
<div class="t" id="t96" style="left:1209.5px;top:587.52px;font-size:13.52px;line-height:18px;color:#333;font-weight:400;">Публичный</div>
<div class="t" id="t97" style="left:1458.3px;top:587.52px;font-size:13.52px;line-height:18px;color:#333;font-weight:400;letter-spacing:-0.316px;">Нет</div>
<div class="t" id="t98" style="left:1583.5px;top:587.52px;font-size:13.52px;line-height:18px;color:#333;font-weight:400;letter-spacing:-0.866px;">QCOW2</div>
<div class="t" id="t99" style="left:1709.5px;top:587.52px;font-size:13.52px;line-height:18px;color:#333;font-weight:400;letter-spacing:-0.442px;">1.58 ГБ</div>
<div class="a" style="left:1789px;top:581px;width:84px;height:30px;background:#428bca;border:1px solid #3275b8;border-right:0;border-radius:4px 0 0 4px;box-sizing:border-box"></div>
<div class="t" id="t100" style="left:1803.3px;top:588.28px;font-size:12.48px;line-height:16px;color:#fff;font-weight:400;letter-spacing:-0.042px;">Запустить</div>
<div class="a" style="left:1872px;top:581px;width:24.5px;height:30px;background:#fff;border:1px solid #ccc;border-radius:0 4px 4px 0;box-sizing:border-box"></div>
<div class="a" style="left:1880.8px;top:594px;width:0;height:0;border-left:3.7px solid transparent;border-right:3.7px solid transparent;border-top:4.3px solid #333"></div>
<div class="a" style="left:255px;top:623px;width:1650px;height:52px;background:#f9f9f9"></div>
<div class="a" style="left:255px;top:675px;width:1650px;height:1px;background:#ddd"></div>
<div class="a" style="left:269px;top:645px;width:11px;height:10.3px;background:#fff;border:1.3px solid #4a4a4a;border-left-color:#858585;border-right-color:#858585;border-radius:2px;box-sizing:border-box"></div>
<svg class="a" style="left:301px;top:642.5px" width="11" height="13" viewBox="0 0 11 13"><path d="M3.3 2.2 L7.3 6.2 L3.3 10.2" fill="none" stroke="#333" stroke-width="2.5" stroke-linecap="round"/></svg>
<div class="t" id="t101" style="left:322.5px;top:640.72px;font-size:13.52px;line-height:18px;color:#333;font-weight:400;letter-spacing:0.029px;">demo</div>
<div class="t" id="t102" style="left:417.2px;top:640.52px;font-size:13.52px;line-height:18px;color:#2368b6;font-weight:400;letter-spacing:-0.097px;">cdbde045-cb23-42e8-896c-37a0b52a719f_5a3c76e1-6b59-435e-a794-b77b0af66bc7-shelved</div>
<div class="t" id="t103" style="left:1066.4px;top:632.02px;font-size:13.52px;line-height:18px;color:#333;font-weight:400;letter-spacing:-0.098px;">Снимо</div>
<div class="t" id="t104" style="left:1066.4px;top:650.22px;font-size:13.52px;line-height:18px;color:#333;font-weight:400;">к</div>
<div class="t" id="t105" style="left:1130.4px;top:632.02px;font-size:13.52px;line-height:18px;color:#333;font-weight:400;letter-spacing:0.135px;">Активны</div>
<div class="t" id="t106" style="left:1130.4px;top:650.22px;font-size:13.52px;line-height:18px;color:#333;font-weight:400;">й</div>
<div class="t" id="t107" style="left:1209.5px;top:640.52px;font-size:13.52px;line-height:18px;color:#333;font-weight:400;">Частный</div>
<div class="t" id="t108" style="left:1458.3px;top:640.52px;font-size:13.52px;line-height:18px;color:#333;font-weight:400;letter-spacing:-0.316px;">Нет</div>
<div class="t" id="t109" style="left:1583.5px;top:640.52px;font-size:13.52px;line-height:18px;color:#333;font-weight:400;letter-spacing:-0.866px;">QCOW2</div>
<div class="t" id="t110" style="left:1709.5px;top:640.52px;font-size:13.52px;line-height:18px;color:#333;font-weight:400;letter-spacing:-0.331px;">18.38 МБ</div>
<div class="a" style="left:1789px;top:634px;width:84px;height:30px;background:#428bca;border:1px solid #3275b8;border-right:0;border-radius:4px 0 0 4px;box-sizing:border-box"></div>
<div class="t" id="t111" style="left:1803.3px;top:641.28px;font-size:12.48px;line-height:16px;color:#fff;font-weight:400;letter-spacing:-0.042px;">Запустить</div>
<div class="a" style="left:1872px;top:634px;width:24.5px;height:30px;background:#fff;border:1px solid #ccc;border-radius:0 4px 4px 0;box-sizing:border-box"></div>
<div class="a" style="left:1880.8px;top:647px;width:0;height:0;border-left:3.7px solid transparent;border-right:3.7px solid transparent;border-top:4.3px solid #333"></div>
<div class="a" style="left:255px;top:728px;width:1650px;height:1px;background:#ddd"></div>
<div class="a" style="left:269px;top:698px;width:11px;height:10.3px;background:#fff;border:1.3px solid #4a4a4a;border-left-color:#858585;border-right-color:#858585;border-radius:2px;box-sizing:border-box"></div>
<svg class="a" style="left:301px;top:695.5px" width="11" height="13" viewBox="0 0 11 13"><path d="M3.3 2.2 L7.3 6.2 L3.3 10.2" fill="none" stroke="#333" stroke-width="2.5" stroke-linecap="round"/></svg>
<div class="t" id="t112" style="left:322.5px;top:693.72px;font-size:13.52px;line-height:18px;color:#333;font-weight:400;letter-spacing:0.272px;">admin</div>
<div class="t" id="t113" style="left:417.2px;top:693.52px;font-size:13.52px;line-height:18px;color:#2368b6;font-weight:400;letter-spacing:0.059px;">centos7cloud</div>
<div class="t" id="t114" style="left:1066.4px;top:693.52px;font-size:13.52px;line-height:18px;color:#333;font-weight:400;letter-spacing:-0.086px;">Образ</div>
<div class="t" id="t115" style="left:1130.4px;top:685.02px;font-size:13.52px;line-height:18px;color:#333;font-weight:400;letter-spacing:0.135px;">Активны</div>
<div class="t" id="t116" style="left:1130.4px;top:703.22px;font-size:13.52px;line-height:18px;color:#333;font-weight:400;">й</div>
<div class="t" id="t117" style="left:1209.5px;top:693.52px;font-size:13.52px;line-height:18px;color:#333;font-weight:400;">Публичный</div>
<div class="t" id="t118" style="left:1458.3px;top:693.52px;font-size:13.52px;line-height:18px;color:#333;font-weight:400;letter-spacing:-0.316px;">Нет</div>
<div class="t" id="t119" style="left:1583.5px;top:693.52px;font-size:13.52px;line-height:18px;color:#333;font-weight:400;letter-spacing:-0.866px;">QCOW2</div>
<div class="t" id="t120" style="left:1709.5px;top:693.52px;font-size:13.52px;line-height:18px;color:#333;font-weight:400;letter-spacing:-0.242px;">894.56 МБ</div>
<div class="a" style="left:1789px;top:687px;width:84px;height:30px;background:#428bca;border:1px solid #3275b8;border-right:0;border-radius:4px 0 0 4px;box-sizing:border-box"></div>
<div class="t" id="t121" style="left:1803.3px;top:694.28px;font-size:12.48px;line-height:16px;color:#fff;font-weight:400;letter-spacing:-0.042px;">Запустить</div>
<div class="a" style="left:1872px;top:687px;width:24.5px;height:30px;background:#fff;border:1px solid #ccc;border-radius:0 4px 4px 0;box-sizing:border-box"></div>
<div class="a" style="left:1880.8px;top:700px;width:0;height:0;border-left:3.7px solid transparent;border-right:3.7px solid transparent;border-top:4.3px solid #333"></div>
<div class="t" id="t122" style="left:270.2px;top:745.12px;font-size:13.52px;line-height:18px;color:#333;font-weight:400;letter-spacing:0.047px;">Отображено 8 элементов</div>
<div class="a" style="left:439px;top:737px;width:82px;height:32px;background:#fff;border:1px solid #ddd;border-radius:4px;box-sizing:border-box"></div>
<div class="t" id="t123" style="left:452.2px;top:745.12px;font-size:13.52px;line-height:18px;color:#428bca;font-weight:400;letter-spacing:-0.364px;">Вперёд »</div>
<div class="a" style="left:1706px;top:348px;width:191px;height:107px;background:#fff;border:1px solid rgba(0,0,0,.15);border-radius:4px;box-sizing:border-box;box-shadow:0 6px 12px rgba(0,0,0,.175)"></div>
<div class="t" id="t124" style="left:1730.8px;top:358.02px;font-size:13.52px;line-height:18px;color:#1f70cf;font-weight:400;letter-spacing:0.109px;">Обновить метаданные</div>
<div class="t" id="t125" style="left:1730.8px;top:381.82px;font-size:13.52px;line-height:18px;color:#1f70cf;font-weight:400;letter-spacing:0.068px;">Редактировать образ</div>
<div class="t" id="t126" style="left:1730.8px;top:405.92px;font-size:13.52px;line-height:18px;color:#1f70cf;font-weight:400;letter-spacing:-0.112px;">Создать диск</div>
<svg class="a" style="left:1727px;top:433.5px" width="10" height="11" viewBox="0 0 10 11">
<path d="M3.2 1.8 V1 Q3.2 0.4 3.9 0.4 H6.1 Q6.8 0.4 6.8 1 V1.8" stroke="#d9534f" stroke-width="1" fill="none"/>
<rect x="0" y="1.8" width="10" height="1.5" fill="#d9534f"/>
<path d="M0.9 3.2 H9.1 L8.6 11 H1.4 Z" fill="#d9534f"/>
<rect x="2.3" y="4.3" width="5.4" height="5.4" fill="#fff" opacity=".6"/>
<rect x="4.6" y="4.3" width="0.8" height="5.4" fill="#d9534f" opacity=".8"/>
</svg>
<div class="t" id="t127" style="left:1740.8px;top:430.12px;font-size:13.52px;line-height:18px;color:#d9534f;font-weight:400;letter-spacing:0.041px;">Удалить образ</div>
<div class="a" style="left:1880px;top:246px;width:4px;height:56px;background:#f00"></div>
<svg class="a" style="left:1870px;top:295px" width="20" height="25" viewBox="0 0 20 25"><path d="M7.9 6 H16.1 V8.5 L12.2 19.6 H11.8 L7.9 8.5 Z" fill="#f00"/></svg></body></html>
